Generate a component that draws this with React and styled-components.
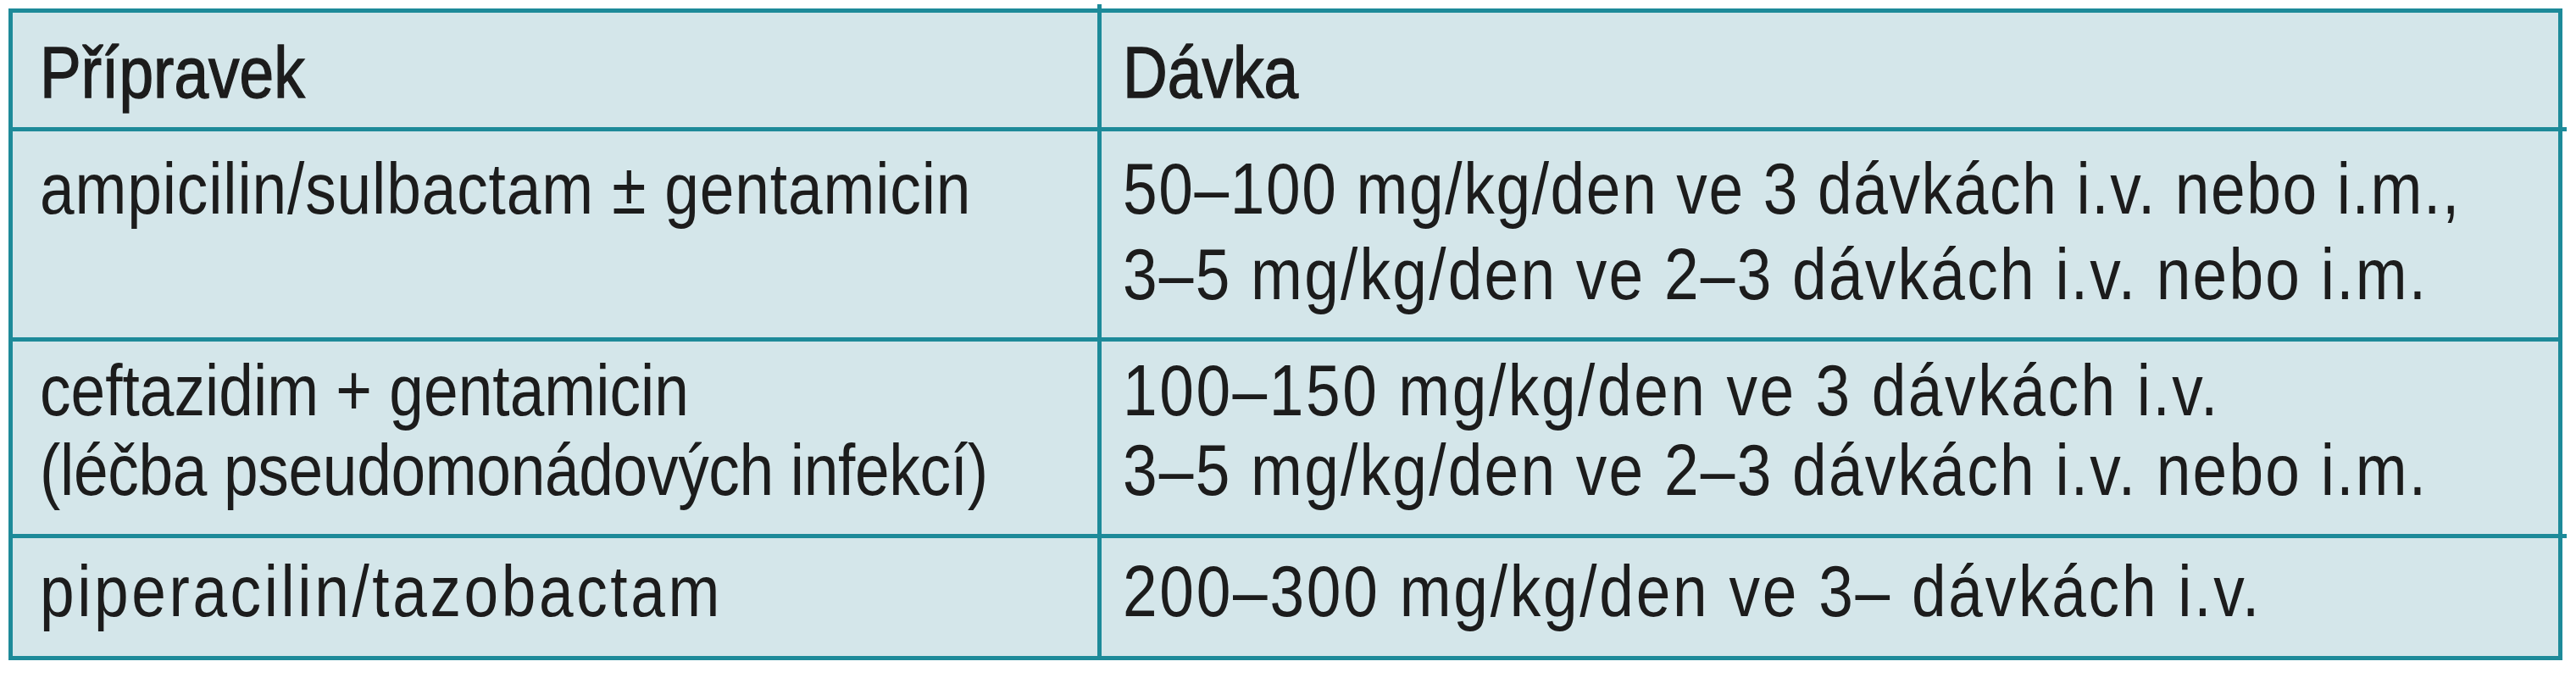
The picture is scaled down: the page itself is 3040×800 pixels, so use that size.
import React from "react";
import styled, { createGlobalStyle } from "styled-components";

const Global = createGlobalStyle`
  html, body { margin: 0; padding: 0; background: #ffffff; }
  body { font-family: "Liberation Sans", Arial, sans-serif; }
`;

const Page = styled.div`
  padding: 10px;
  width: 3014px;
`;

const Table = styled.div`
  position: relative;
  display: grid;
  grid-template-columns: 1280px 1719px;
  grid-template-rows: 135px 243px 227px 139px;
  gap: 5px;
  padding: 5px;
  background: #1d8a99;

  &::before {
    content: "";
    position: absolute;
    left: 1285px;
    top: -5px;
    width: 5px;
    height: 5px;
    background: #1d8a99;
  }

  &::after {
    content: "";
    position: absolute;
    right: -5px;
    top: 140px;
    width: 5px;
    height: 5px;
    background: #1d8a99;
    box-shadow: 0 480px 0 #1d8a99;
  }
`;

const Cell = styled.div`
  background: #d4e6ea;
  color: #1c1c1c;
  font-size: 86px;
  line-height: ${(p) => p.$lh}px;
  padding-top: ${(p) => p.$pt}px;
  padding-left: ${(p) => (p.$col === 0 ? 32 : 25)}px;
  white-space: nowrap;
  ${(p) => p.$head && "-webkit-text-stroke: 1.4px #1c1c1c;"}
`;

const Line = styled.div`
  transform: scaleX(0.85);
  transform-origin: left center;
  letter-spacing: ${(p) => p.$ls || 0}px;
`;

const rows = [
  { head: true, lh: 94, pt: 23, a: [{ t: "Přípravek" }], b: [{ t: "Dávka" }] },
  {
    lh: 101,
    pt: 17,
    a: [{ t: "ampicilin/sulbactam ± gentamicin", ls: 1 }],
    b: [
      { t: "50–100 mg/kg/den ve 3 dávkách i.v. nebo i.m.,", ls: 1.9 },
      { t: "3–5 mg/kg/den ve 2–3 dávkách i.v. nebo i.m.", ls: 2.6 },
    ],
  },
  {
    lh: 94,
    pt: 10,
    a: [
      { t: "ceftazidim + gentamicin" },
      { t: "(léčba pseudomonádových infekcí)", ls: -0.4 },
    ],
    b: [
      { t: "100–150 mg/kg/den ve 3 dávkách i.v.", ls: 3 },
      { t: "3–5 mg/kg/den ve 2–3 dávkách i.v. nebo i.m.", ls: 2.6 },
    ],
  },
  {
    lh: 94,
    pt: 15,
    a: [{ t: "piperacilin/tazobactam", ls: 4.2 }],
    b: [{ t: "200–300 mg/kg/den ve 3– dávkách i.v.", ls: 3.2 }],
  },
];

export default function App() {
  return (
    <>
      <Global />
      <Page>
        <Table>
          {rows.map((r, i) => (
            <React.Fragment key={i}>
              <Cell $head={r.head} $lh={r.lh} $pt={r.pt} $col={0}>
                {r.a.map((l, j) => (
                  <Line key={j} $ls={l.ls}>
                    {l.t}
                  </Line>
                ))}
              </Cell>
              <Cell $head={r.head} $lh={r.lh} $pt={r.pt} $col={1}>
                {r.b.map((l, j) => (
                  <Line key={j} $ls={l.ls}>
                    {l.t}
                  </Line>
                ))}
              </Cell>
            </React.Fragment>
          ))}
        </Table>
      </Page>
    </>
  );
}
